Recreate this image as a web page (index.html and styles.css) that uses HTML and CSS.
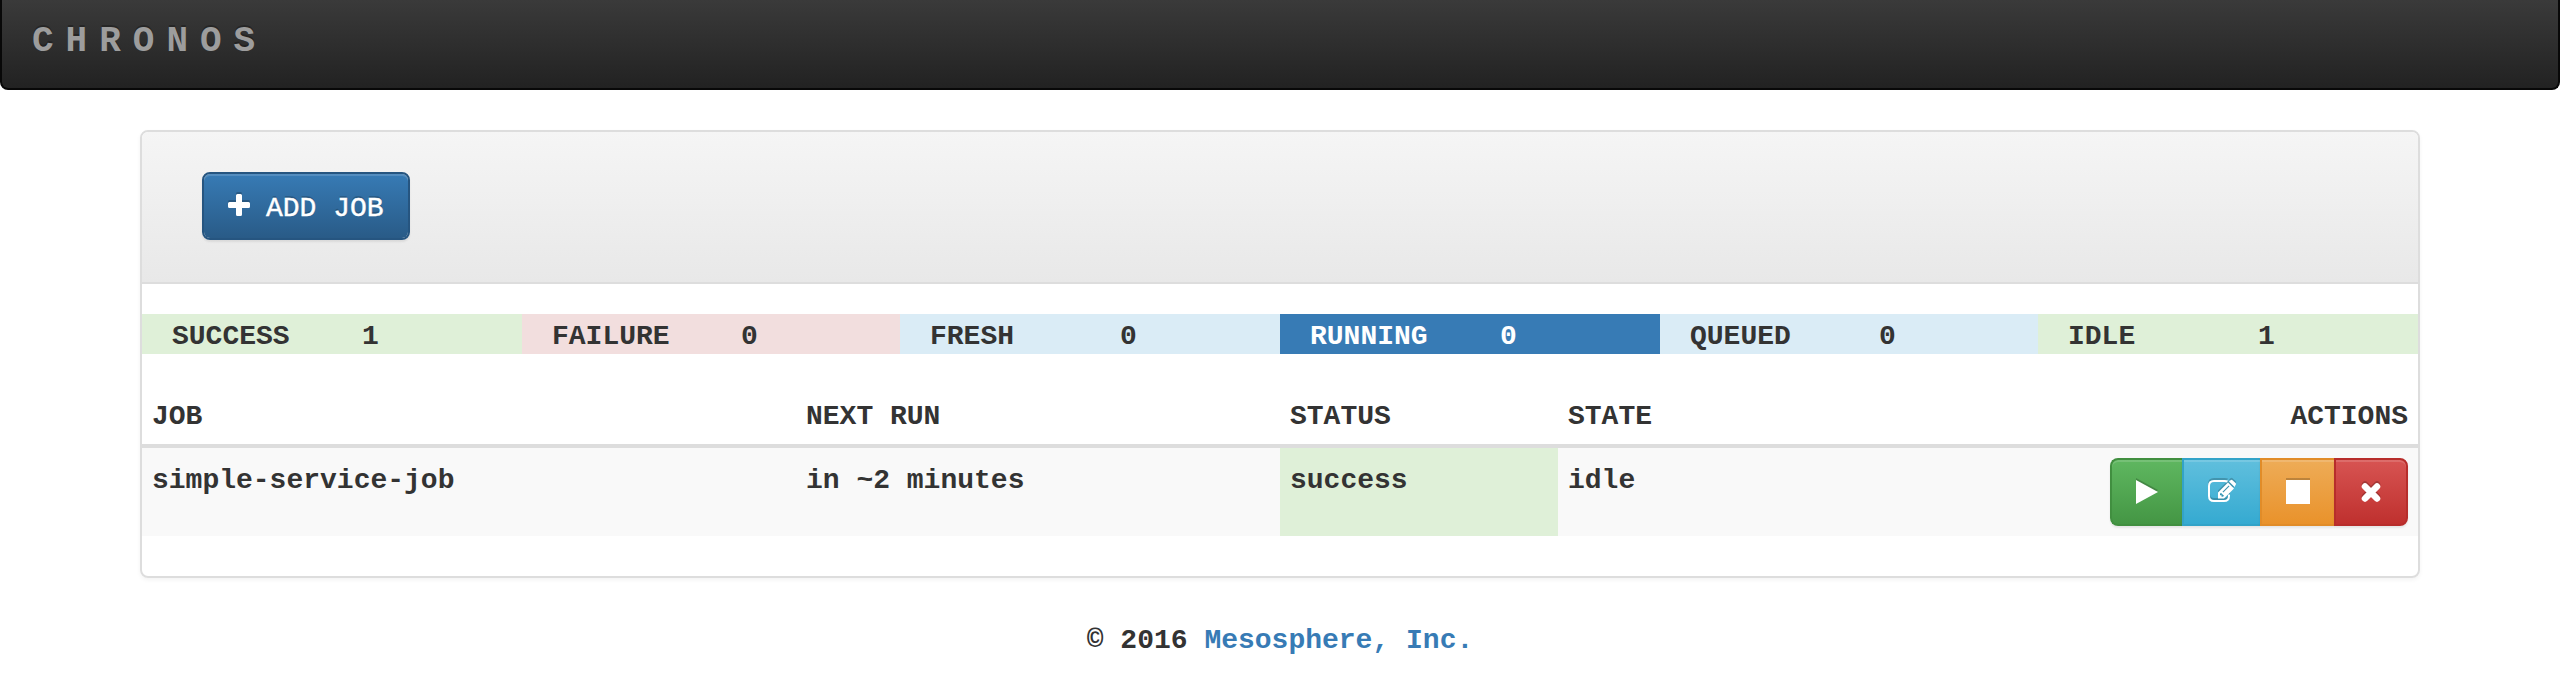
FILE: index.html
```html
<!DOCTYPE html>
<html lang="en">
<head>
<meta charset="utf-8">
<title>Chronos</title>
<link rel="stylesheet" href="styles.css">
</head>
<body>
<nav class="navbar"><a class="brand">CHRONOS</a></nav>
<main class="panel">
  <header class="panel-heading">
    <button class="btn btn-primary"><svg class="icon-plus" viewBox="0 0 22 22"><path d="M9.5 0h3q1.5 0 1.5 1.5V8h6.500q1.5 0 1.500 1.500v3q0 1.500-1.500 1.500H14v6.500q0 1.500-1.500 1.500h-3Q8 22 8 20.500V14H1.500Q0 14 0 12.500v-3Q0 8 1.500 8H8V1.500Q8 0 9.500 0z"/></svg><span class="label">ADD JOB</span></button>
  </header>
  <section class="stats">
    <div class="stat success"><span>SUCCESS</span><span>1</span></div>
    <div class="stat failure"><span>FAILURE</span><span>0</span></div>
    <div class="stat info"><span>FRESH</span><span>0</span></div>
    <div class="stat running"><span>RUNNING</span><span>0</span></div>
    <div class="stat info"><span>QUEUED</span><span>0</span></div>
    <div class="stat success"><span>IDLE</span><span>1</span></div>
  </section>
  <table class="jobs">
    <colgroup><col class="c-job"><col class="c-next"><col class="c-status"><col class="c-state"><col></colgroup>
    <thead><tr><th>JOB</th><th>NEXT RUN</th><th>STATUS</th><th>STATE</th><th class="right">ACTIONS</th></tr></thead>
    <tbody><tr>
      <td>simple-service-job</td><td>in ~2 minutes</td><td class="success">success</td><td>idle</td>
      <td class="right"><div class="btn-group">
        <button class="btn btn-run"><svg class="icon-play" viewBox="0 0 22 24"><path d="M0 0L22 12L0 24z"/></svg></button>
        <button class="btn btn-edit"><svg class="icon-edit" viewBox="0 0 28 24"><path class="line" d="M19.500 1.500Q18.500 1 16.500 1H6Q1 1 1 6V16Q1 21 6 21H16Q21 21 21 16V14.500"/><path fill-rule="evenodd" d="M10 18.500V12.500L20 2.500L26 8.500L16 18.500zM12 13.800v1.400h1.500v1.500H15l1-1-3-3zM14.500 11.700l.8.8 6.200-6.200-.8-.8z"/><path d="M21 1.500L22.500 .2Q23.500 -.6 24.500 .2L27.500 3Q28.500 4 27.500 5L26.700 7z"/></svg></button>
        <button class="btn btn-stop"><svg class="icon-stop" viewBox="0 0 24 24"><path d="M0 0H24V24H0z"/></svg></button>
        <button class="btn btn-delete"><svg class="icon-x" viewBox="0 0 20 20"><path class="cross" d="M4 4.500L16 16.500M16 4.500L4 16.500"/></svg></button>
      </div></td>
    </tr></tbody>
  </table>
</main>
<footer class="footer">© 2016 <a class="link">Mesosphere, Inc.</a></footer>
</body>
</html>
```
FILE: styles.css
```css
* { box-sizing: border-box; }
body {
  margin: 0;
  background: #fff;
  color: #333;
  font: bold 28px/40px Courier, "Liberation Mono", monospace;
}
.navbar {
  height: 90px;
  padding: 22px 30px;
  border: 2px solid #080808;
  border-top: 0;
  border-radius: 0 0 8px 8px;
  background: linear-gradient(#3a3a3a, #222);
}
.brand {
  display: block;
  font-size: 36px;
  letter-spacing: 12px;
  color: #9d9d9d;
  text-shadow: 0 -2px 0 rgba(0, 0, 0, .25);
}
.panel {
  width: 2280px;
  height: 448px;
  margin: 40px auto 0;
  border: 2px solid #ddd;
  border-radius: 8px;
  box-shadow: 0 2px 4px rgba(0, 0, 0, .05);
}
.panel-heading {
  height: 152px;
  padding: 40px 60px;
  border-bottom: 2px solid #ddd;
  border-radius: 6px 6px 0 0;
  background: linear-gradient(#f5f5f5, #e8e8e8);
}
.btn {
  display: flex;
  align-items: center;
  justify-content: center;
  height: 68px;
  padding: 0;
  border: 2px solid;
  border-radius: 8px;
  color: #fff;
  font: 28px/40px Courier, "Liberation Mono", monospace;
  text-shadow: 0 -2px 0 rgba(0, 0, 0, .2);
  box-shadow: inset 0 2px 0 rgba(255, 255, 255, .15), 0 2px 2px rgba(0, 0, 0, .075);
}
.btn svg {
  display: block;
  overflow: visible;
  fill: #fff;
  filter: drop-shadow(0 -2px 0 rgba(0, 0, 0, .2));
}
.btn-primary {
  justify-content: flex-start;
  gap: 16px;
  width: 208px;
  padding-left: 24px;
  border-color: #265580;
  background: linear-gradient(#377bb5, #295b87) padding-box;
}
.icon-plus { width: 22px; height: 22px; margin-bottom: 2px; }
.label { padding-top: 6px; -webkit-text-stroke: .4px #fff; }
.stats { display: grid; grid-template-columns: 380fr 378fr 380fr 380fr 378fr 380fr; margin-top: 30px; }
.stat { display: grid; grid-template-columns: 1fr 1fr; height: 40px; line-height: 46px; }
.stat span { padding-left: 30px; }
.success { background: #dff0d8; }
.failure { background: #f2dede; }
.info { background: #daecf6; }
.running { background: #377bb5; color: #fff; }
.jobs { width: 100%; margin-top: 30px; border-collapse: separate; border-spacing: 0; table-layout: fixed; }
.c-job { width: 654px; }
.c-next { width: 484px; }
.c-status { width: 278px; }
.c-state { width: 278px; }
.jobs th { height: 64px; padding: 13px 10px 7px; border-bottom: 4px solid #ddd; text-align: left; vertical-align: top; }
.jobs td { height: 88px; padding: 13px 10px 7px; background: #f9f9f9; vertical-align: top; }
.jobs td.success { background: #dff0d8; }
.jobs .right { text-align: right; }
.jobs td.right { padding: 10px; }
.btn-group { display: flex; justify-content: flex-end; }
.btn-group .btn { border-radius: 0; }
.btn-group .btn-run { width: 72px; border-right: 0; border-radius: 8px 0 0 8px; border-color: #418f40; background: linear-gradient(#5fb760, #449644); }
.btn-group .btn-edit { width: 78px; border-right: 0; border-color: #32a3c8; background: linear-gradient(#60bfdd, #35aad1); }
.btn-group .btn-stop { width: 74px; border-right: 0; border-color: #e18c28; background: linear-gradient(#eeac57, #e9922b); }
.btn-group .btn-delete { width: 74px; border-radius: 0 8px 8px 0; border-color: #b72d2b; background: linear-gradient(#d75452, #bf302e); }
.icon-play { width: 22px; height: 24px; }
.icon-edit { width: 28px; height: 24px; }
.icon-stop { width: 24px; height: 24px; }
.icon-x { width: 20px; height: 20px; }
.line { fill: none; stroke: #fff; stroke-width: 2; }
.cross { stroke: #fff; stroke-width: 6.500; stroke-linecap: round; }
.footer { margin-top: 43px; text-align: center; }
.link { color: #377bb5; }
```
